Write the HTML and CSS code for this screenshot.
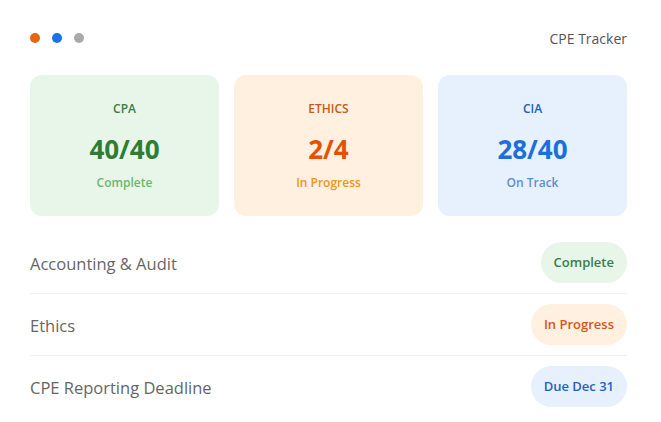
FILE: index.html
```html
<!DOCTYPE html>
<html lang="en">
<head>
    <meta charset="UTF-8">
    <meta name="viewport" content="width=device-width, initial-scale=1.0">
    <title>CPE Tracker</title>
    <link rel="stylesheet" href="styles.css">
</head>
<body>

    <div class="tracker">
        <!-- Header -->
        <div class="header">
            <div class="dots">
                <span class="dot orange"></span>
                <span class="dot blue"></span>
                <span class="dot gray"></span>
            </div>
            <span class="title">CPE Tracker</span>
        </div>

        <!-- Summary Cards -->
        <div class="cards">
            <div class="card green">
                <p class="card-label">CPA</p>
                <p class="card-value">40/40</p>
                <p class="card-status">Complete</p>
            </div>
            <div class="card orange">
                <p class="card-label">ETHICS</p>
                <p class="card-value">2/4</p>
                <p class="card-status">In Progress</p>
            </div>
            <div class="card blue">
                <p class="card-label">CIA</p>
                <p class="card-value">28/40</p>
                <p class="card-status">On Track</p>
            </div>
        </div>

        <!-- Requirement Rows -->
        <div class="rows">
            <div class="row">
                <span class="row-label">Accounting &amp; Audit</span>
                <span class="badge green">Complete</span>
            </div>
            <div class="row">
                <span class="row-label">Ethics</span>
                <span class="badge orange">In Progress</span>
            </div>
            <div class="row">
                <span class="row-label">CPE Reporting Deadline</span>
                <span class="badge blue">Due Dec 31</span>
            </div>
        </div>
    </div>

</body>
</html>
```

FILE: styles.css
```css
* {
    margin: 0;
    padding: 0;
    box-sizing: border-box;
}

body {
    font-family: 'Open Sans', 'Noto Sans', sans-serif;
    background-color: #fff;
    color: #555;
}

.tracker {
    padding: 28px 34px 0 30px;
}

/* Header */
.header {
    display: flex;
    justify-content: space-between;
    align-items: center;
    height: 20px;
}

.dots {
    display: flex;
    gap: 12px;
}

.dot {
    width: 10px;
    height: 10px;
    border-radius: 50%;
}

.dot.orange { background-color: #e8640f; }
.dot.blue { background-color: #1a73e8; }
.dot.gray { background-color: #aaa; }

.title {
    font-size: 14px;
    color: #555;
}

/* Cards */
.cards {
    display: grid;
    grid-template-columns: repeat(3, 1fr);
    gap: 15px;
    margin-top: 27px;
}

.card {
    height: 141px;
    border-radius: 12px;
    padding-top: 26px;
    text-align: center;
}

.card-label {
    font-size: 12px;
    font-weight: 600;
    line-height: 16px;
}

.card-value {
    font-size: 26px;
    font-weight: 700;
    line-height: 32px;
    margin-top: 16px;
}

.card-status {
    font-size: 12px;
    font-weight: 600;
    line-height: 16px;
    margin-top: 10px;
}

.card.green { background-color: #e8f5e9; }
.card.green .card-label { color: #3d7d45; }
.card.green .card-value { color: #2e7d32; }
.card.green .card-status { color: #66bb6a; }

.card.orange { background-color: #fff0df; }
.card.orange .card-label { color: #c55a1c; }
.card.orange .card-value { color: #e65100; }
.card.orange .card-status { color: #f0931b; }

.card.blue { background-color: #e7f0fd; }
.card.blue .card-label { color: #1e5fb8; }
.card.blue .card-value { color: #1a6fdc; }
.card.blue .card-status { color: #5b8fd8; }

/* Rows */
.rows {
    margin-top: 16px;
}

.row {
    display: flex;
    justify-content: space-between;
    align-items: center;
    padding: 10px 0;
    border-bottom: 1px solid #f0f0f0;
}

.row:last-child {
    border-bottom: none;
}

.row-label {
    font-size: 16.5px;
    color: #666;
    padding-top: 2px;
}

.badge {
    font-size: 13px;
    font-weight: 600;
    line-height: 19px;
    padding: 11px 13px;
    border-radius: 999px;
}

.badge.green { background-color: #e8f5e9; color: #3b7d42; }
.badge.orange { background-color: #fff0df; color: #d9541a; }
.badge.blue { background-color: #e7f0fd; color: #1e62c8; }
```
